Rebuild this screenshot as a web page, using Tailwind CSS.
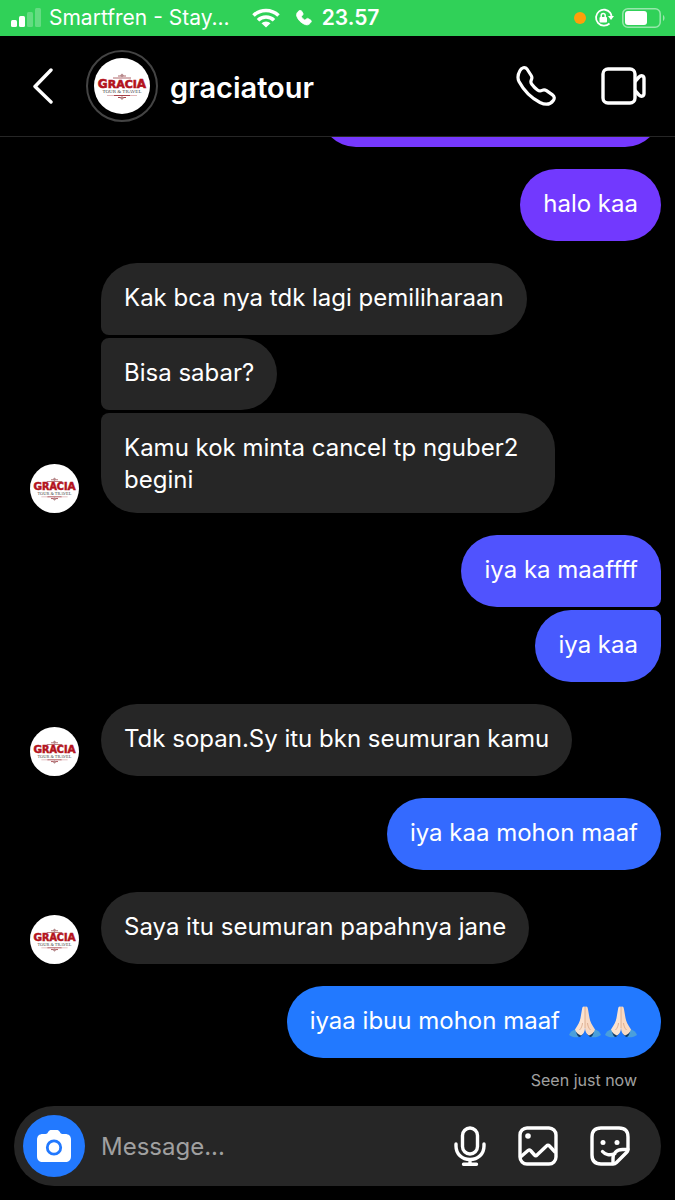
<!DOCTYPE html>
<html lang="id">

<head>
  <meta charset="UTF-8">
  <meta name="viewport" content="width=device-width, initial-scale=1.0">
  <title>graciatour</title>
  <script src="https://cdn.jsdelivr.net/npm/@tailwindcss/browser@4"></script>
</head>

<body class="bg-black text-white font-[Inter,sans-serif]">
  <!-- Shared shapes -->
  <svg class="hidden" aria-hidden="true">
    <symbol id="logo" viewBox="0 0 56 56">
      <circle cx="28" cy="28" r="28" fill="#fff" />
      <path d="M19 20h18M24 18h8" stroke="#b0686c" stroke-width="1" />
      <path d="M28 15.500l2 2-2 2-2-2z" fill="#b58a8c" />
      <text x="28" y="30" text-anchor="middle" font-family="DejaVu Sans, sans-serif" font-weight="700" fill="#b3121d"
        stroke="#b3121d" stroke-width=".6"><tspan font-size="12">G</tspan><tspan font-size="11">RACI</tspan><tspan
          font-size="12">A</tspan></text>
      <text x="28" y="35" text-anchor="middle" font-family="Liberation Serif, serif" font-size="5" fill="#444">TOUR &amp; TRAVEL</text>
      <path d="M13 37.500h8M35 37.500h8" stroke="#d9a5a8" stroke-width=".8" />
      <path d="M20 37.500h16M24 39.500h8" stroke="#a8434a" stroke-width="1" />
      <path d="M28 38l2 2-2 2-2-2z" fill="#b58a8c" />
    </symbol>
    <symbol id="pray" viewBox="0 0 34 34">
      <path d="M1 30c1-3 3.500-5 7-6l6 5c-2 4-8 4.500-13 1z" fill="#4a9fdc" />
      <path d="M33 30c-1-3-3.500-5-7-6l-6 5c2 4 8 4.500 13 1z" fill="#4a9fdc" />
      <path d="M8 27l7 2-3 3c-2 0-3-2-4-5zM26 27l-7 2 3 3c2 0 3-2 4-5z" fill="#123a63" />
      <path d="M17 2c-1.500-1-2.600-.2-2.900 1.800L12.500 13c-.6 4-2.500 7-5.500 11.500 1 3 3 5 6 6 2.500-1.500 4-4 4-8z" fill="#fce3d0" />
      <path d="M17 2c1.500-1 2.600-.2 2.900 1.800L21.500 13c.6 4 2.500 7 5.500 11.500-1 3-3 5-6 6-2.500-1.500-4-4-4-8z" fill="#f9d9c2" />
      <path d="M17 2v21M14.500 18c-.4 3-1 5-3 7M19.500 18c.4 3 1 5 3 7" fill="none" stroke="#d6a486" stroke-width=".8" />
    </symbol>
  </svg>

  <div class="flex flex-col h-screen">
    <!-- Status bar -->
    <div class="flex items-center h-9 shrink-0 pl-[11px] pr-[9px] bg-[#30d158]">
      <svg class="w-[30px] h-5" viewBox="0 0 30 20" fill="#fff">
        <rect y="12" width="6" height="7" rx="1.500" />
        <rect x="8" y="8" width="6" height="11" rx="1.500" />
        <g opacity=".25">
          <rect x="16" y="4" width="6" height="15" rx="1.500" />
          <rect x="24" y="0" width="6" height="19" rx="1.500" />
        </g>
      </svg>
      <span class="ml-2 text-[21px] leading-6">Smartfren - Stay...</span>
      <svg class="ml-[22px] w-7 h-5" viewBox="0 0 28 20" fill="none" stroke="#fff" stroke-width="3.600">
        <path d="M1.500 7.500a18 18 0 0 1 25 0M6 12.300a11.500 11.500 0 0 1 16 0" />
        <path d="M14 19.500l-4.500-4.300a6.500 6.500 0 0 1 9 0z" fill="#fff" stroke="none" />
      </svg>
      <svg class="ml-4 w-4 h-4" viewBox="0 0 16 16" fill="#fff" stroke="#fff" stroke-width=".8">
        <path d="M3.500.5c.8-.6 1.500-.4 2 .4l1.300 2.200c.5.8.3 1.500-.3 2.100l-.8.8c-.4.400-.3.800 0 1.200.7 1 1.500 1.900 2.600 2.600.4.300.8.3 1.200-.1l.8-.8c.6-.6 1.300-.7 2.100-.2l2.200 1.400c.8.5 1 1.200.4 2-1.200 1.900-2.700 3.300-5.300 2.600C5.300 13.500 1.800 9.600.7 6 .1 3.600 1.600 1.700 3.500.5z" />
      </svg>
      <span class="ml-[10px] text-[21px] leading-6 font-semibold">23.57</span>
      <span class="ml-auto size-3 rounded-full bg-[#ff9f0a]"></span>
      <svg class="ml-2 w-5 h-5" viewBox="0 0 20 20" fill="none" stroke="#fff" stroke-width="1.800">
        <path d="M16.500 5A8 8 0 1 0 15.500 15.500M16 4.500A8 8 0 0 1 17.500 8" />
        <path d="M14 8h6l-3 4z" fill="#fff" stroke="none" />
        <rect x="5.500" y="9" width="7.500" height="5.500" rx="1" fill="#fff" stroke="none" />
        <path d="M7.200 9.500V7.500a2 2 0 0 1 4 0v2" stroke-width="1.500" />
      </svg>
      <svg class="ml-2 w-11 h-5" viewBox="0 0 44 20">
        <rect x=".8" y=".8" width="37.400" height="18.400" rx="5" fill="none" stroke="#fff" stroke-opacity=".5" stroke-width="1.500" />
        <rect x="3" y="3" width="22" height="14" rx="3" fill="#fff" />
        <path d="M41 7c2 1 2 5 0 6z" fill="#fff" fill-opacity=".5" />
      </svg>
    </div>

    <!-- Header -->
    <header class="flex items-center h-[101px] shrink-0 pl-8 pr-7 border-b border-[#262626]">
      <button type="button" aria-label="Back">
        <svg class="w-[22px] h-9" viewBox="0 0 22 36" fill="none" stroke="#fff" stroke-width="3.400" stroke-linecap="round" stroke-linejoin="round">
          <path d="M19 2L3 18.500 19 34" />
        </svg>
      </button>
      <div class="ml-8 size-[72px] flex items-center justify-center rounded-full border-2 border-[#444]">
        <svg class="size-14" role="img" aria-label="Gracia Tour &amp; Travel"><use href="#logo" /></svg>
      </div>
      <h1 class="ml-3 pt-1 text-[29px] leading-8 font-semibold">graciatour</h1>
      <button type="button" class="ml-auto" aria-label="Audio call">
        <svg class="size-[42px]" viewBox="0 0 42 42" fill="none" stroke="#fff" stroke-width="3.200" stroke-linejoin="round">
          <path d="M5 5.500C6.500 2.500 10 1.500 12 4l4.200 6.500c1 1.600 1 2.600.2 4.200-.9 1.800-.8 3 .4 4.600 1.600 2.200 3.500 4.100 5.700 5.700 1.600 1.200 2.800 1.300 4.600.4 1.600-.8 2.800-.8 4.400.2l6 4.300c2 1.500 2.300 3.600.8 5.600-3 4.200-7.500 4.800-13.300 2C15.500 32.500 8.500 25 4 16.500 1.800 12 3 9 5 5.500z" />
        </svg>
      </button>
      <button type="button" class="ml-11" aria-label="Video call">
        <svg class="w-[46px] h-[38px]" viewBox="0 0 46 38" fill="none" stroke="#fff" stroke-width="3.400" stroke-linejoin="round">
          <rect x="2" y="2" width="32" height="34" rx="5" />
          <path d="M34 14.500l4-4.500c2-2 5-1.500 5 1.500v15c0 3-3 3.500-5 1.500l-4-4.500" />
        </svg>
      </button>
    </header>

    <!-- Messages -->
    <main class="flex-1 min-h-0 overflow-hidden flex flex-col justify-end gap-[22px] pr-[14px] pl-[30px] text-[24px] leading-8">
      <div class="self-end shrink-0 w-[341px] h-[72px] rounded-[36px] bg-[#7638fe]"></div>

      <p class="self-end min-h-[72px] px-[23px] pt-[19px] pb-[17px] rounded-[36px] bg-[#7239fe]">halo kaa</p>

      <div class="flex items-end gap-[22px]">
        <svg class="size-[49px] shrink-0" role="img" aria-label="graciatour"><use href="#logo" /></svg>
        <div class="flex flex-col items-start gap-[3px]">
          <p class="min-h-[72px] px-[23px] pt-[19px] pb-[17px] rounded-[36px] rounded-bl-[8px] bg-[#262626]">Kak bca nya tdk lagi pemiliharaan</p>
          <p class="min-h-[72px] px-[23px] pt-[19px] pb-[17px] rounded-[36px] rounded-l-[8px] bg-[#262626]">Bisa sabar?</p>
          <p class="max-w-[454px] min-h-[72px] px-[23px] pt-[19px] pb-[17px] rounded-[36px] rounded-tl-[8px] bg-[#262626]">Kamu kok minta cancel tp nguber2 begini</p>
        </div>
      </div>

      <div class="flex flex-col items-end gap-[3px]">
        <p class="min-h-[72px] px-[23px] pt-[19px] pb-[17px] rounded-[36px] rounded-br-[8px] bg-[#5053fe]">iya ka maaffff</p>
        <p class="min-h-[72px] px-[23px] pt-[19px] pb-[17px] rounded-[36px] rounded-tr-[8px] bg-[#485afe]">iya kaa</p>
      </div>

      <div class="flex items-end gap-[22px]">
        <svg class="size-[49px] shrink-0" role="img" aria-label="graciatour"><use href="#logo" /></svg>
        <p class="min-h-[72px] px-[23px] pt-[19px] pb-[17px] rounded-[36px] bg-[#262626]">Tdk sopan.Sy itu bkn seumuran kamu</p>
      </div>

      <p class="self-end min-h-[72px] px-[23px] pt-[19px] pb-[17px] rounded-[36px] bg-[#346aff]">iya kaa mohon maaf</p>

      <div class="flex items-end gap-[22px]">
        <svg class="size-[49px] shrink-0" role="img" aria-label="graciatour"><use href="#logo" /></svg>
        <p class="min-h-[72px] px-[23px] pt-[19px] pb-[17px] rounded-[36px] bg-[#262626]">Saya itu seumuran papahnya jane</p>
      </div>

      <div class="flex flex-col items-end">
        <p class="flex gap-2 h-[72px] px-[23px] pt-[19px] pb-[17px] rounded-[36px] bg-[#2279ff]">
          iyaa ibuu mohon maaf
          <span class="flex gap-[2px]">
            <svg class="size-[34px]" role="img" aria-label="🙏🏻"><use href="#pray" /></svg>
            <svg class="size-[34px]" role="img" aria-label="🙏🏻"><use href="#pray" /></svg>
          </span>
        </p>
        <small class="mt-3 mb-4 mr-6 text-[16px] leading-5 text-[#a0a0a0]">Seen just now</small>
      </div>
    </main>

    <!-- Composer -->
    <form class="flex items-center h-20 shrink-0 mx-[14px] mb-[14px] pl-[9px] pr-[31px] rounded-full bg-[#262626]">
      <button type="button" class="size-[62px] shrink-0 flex items-center justify-center rounded-full bg-[#2279ff]" aria-label="Camera">
        <svg class="w-[34px] h-8" viewBox="0 0 34 32">
          <path d="M6 4h2.500c1.500 0 2-.8 2.700-2C12 .6 13 0 14.500 0h5c1.500 0 2.500.6 3.300 2 .7 1.200 1.200 2 2.700 2H28c4 0 6 2 6 6v16c0 4-2 6-6 6H6c-4 0-6-2-6-6V10c0-4 2-6 6-6z" fill="#fff" />
          <circle cx="17" cy="17.500" r="6.700" fill="none" stroke="#2279ff" stroke-width="2.800" />
        </svg>
      </button>
      <input type="text" aria-label="Message" placeholder="Message..."
        class="flex-1 min-w-0 ml-4 h-10 bg-transparent outline-none text-[24px] placeholder:text-[#a0a0a0]">
      <button type="button" aria-label="Voice message">
        <svg class="w-8 h-10" viewBox="0 0 32 40" fill="none" stroke="#fff" stroke-width="3.400" stroke-linecap="round">
          <rect x="8.500" y="2" width="15" height="26" rx="7.500" />
          <path d="M2 18v2c0 8 6 13.500 14 13.500S30 28 30 20v-2M16 34v4M9.500 38.300h13" />
        </svg>
      </button>
      <button type="button" class="ml-8" aria-label="Photo">
        <svg class="size-10" viewBox="0 0 40 40" fill="none" stroke="#fff" stroke-width="3.400" stroke-linejoin="round">
          <rect x="2" y="2" width="36" height="36" rx="7" />
          <path d="M2.500 31l7.500-6.500c1-.8 1.800-.7 2.500 0l4 4.500c.8.900 1.700.9 2.500 0L28.500 20c1-1 2-1 3 0l6 6.500" />
          <circle cx="10" cy="10" r="2.800" fill="#fff" stroke="none" />
        </svg>
      </button>
      <button type="button" class="ml-8" aria-label="Sticker">
        <svg class="size-10" viewBox="0 0 40 40" fill="none" stroke="#fff" stroke-width="3.400" stroke-linejoin="round">
          <path d="M38 23V11c0-6-3-9-9-9H11c-6 0-9 3-9 9v18c0 6 3 9 9 9h12c1.500 0 2.500-.5 3.500-1.500l10-10C37.500 25.500 38 24.500 38 23z" />
          <path d="M23 37.500V33c0-5.500 3.500-9.500 9.500-9.500H38M12.500 25.500c2.500 3 7.500 4.500 12.500 2" stroke-linecap="round" />
          <circle cx="13" cy="16.500" r="2.500" fill="#fff" stroke="none" />
          <circle cx="27" cy="16.500" r="2.500" fill="#fff" stroke="none" />
        </svg>
      </button>
    </form>
  </div>
</body>

</html>
